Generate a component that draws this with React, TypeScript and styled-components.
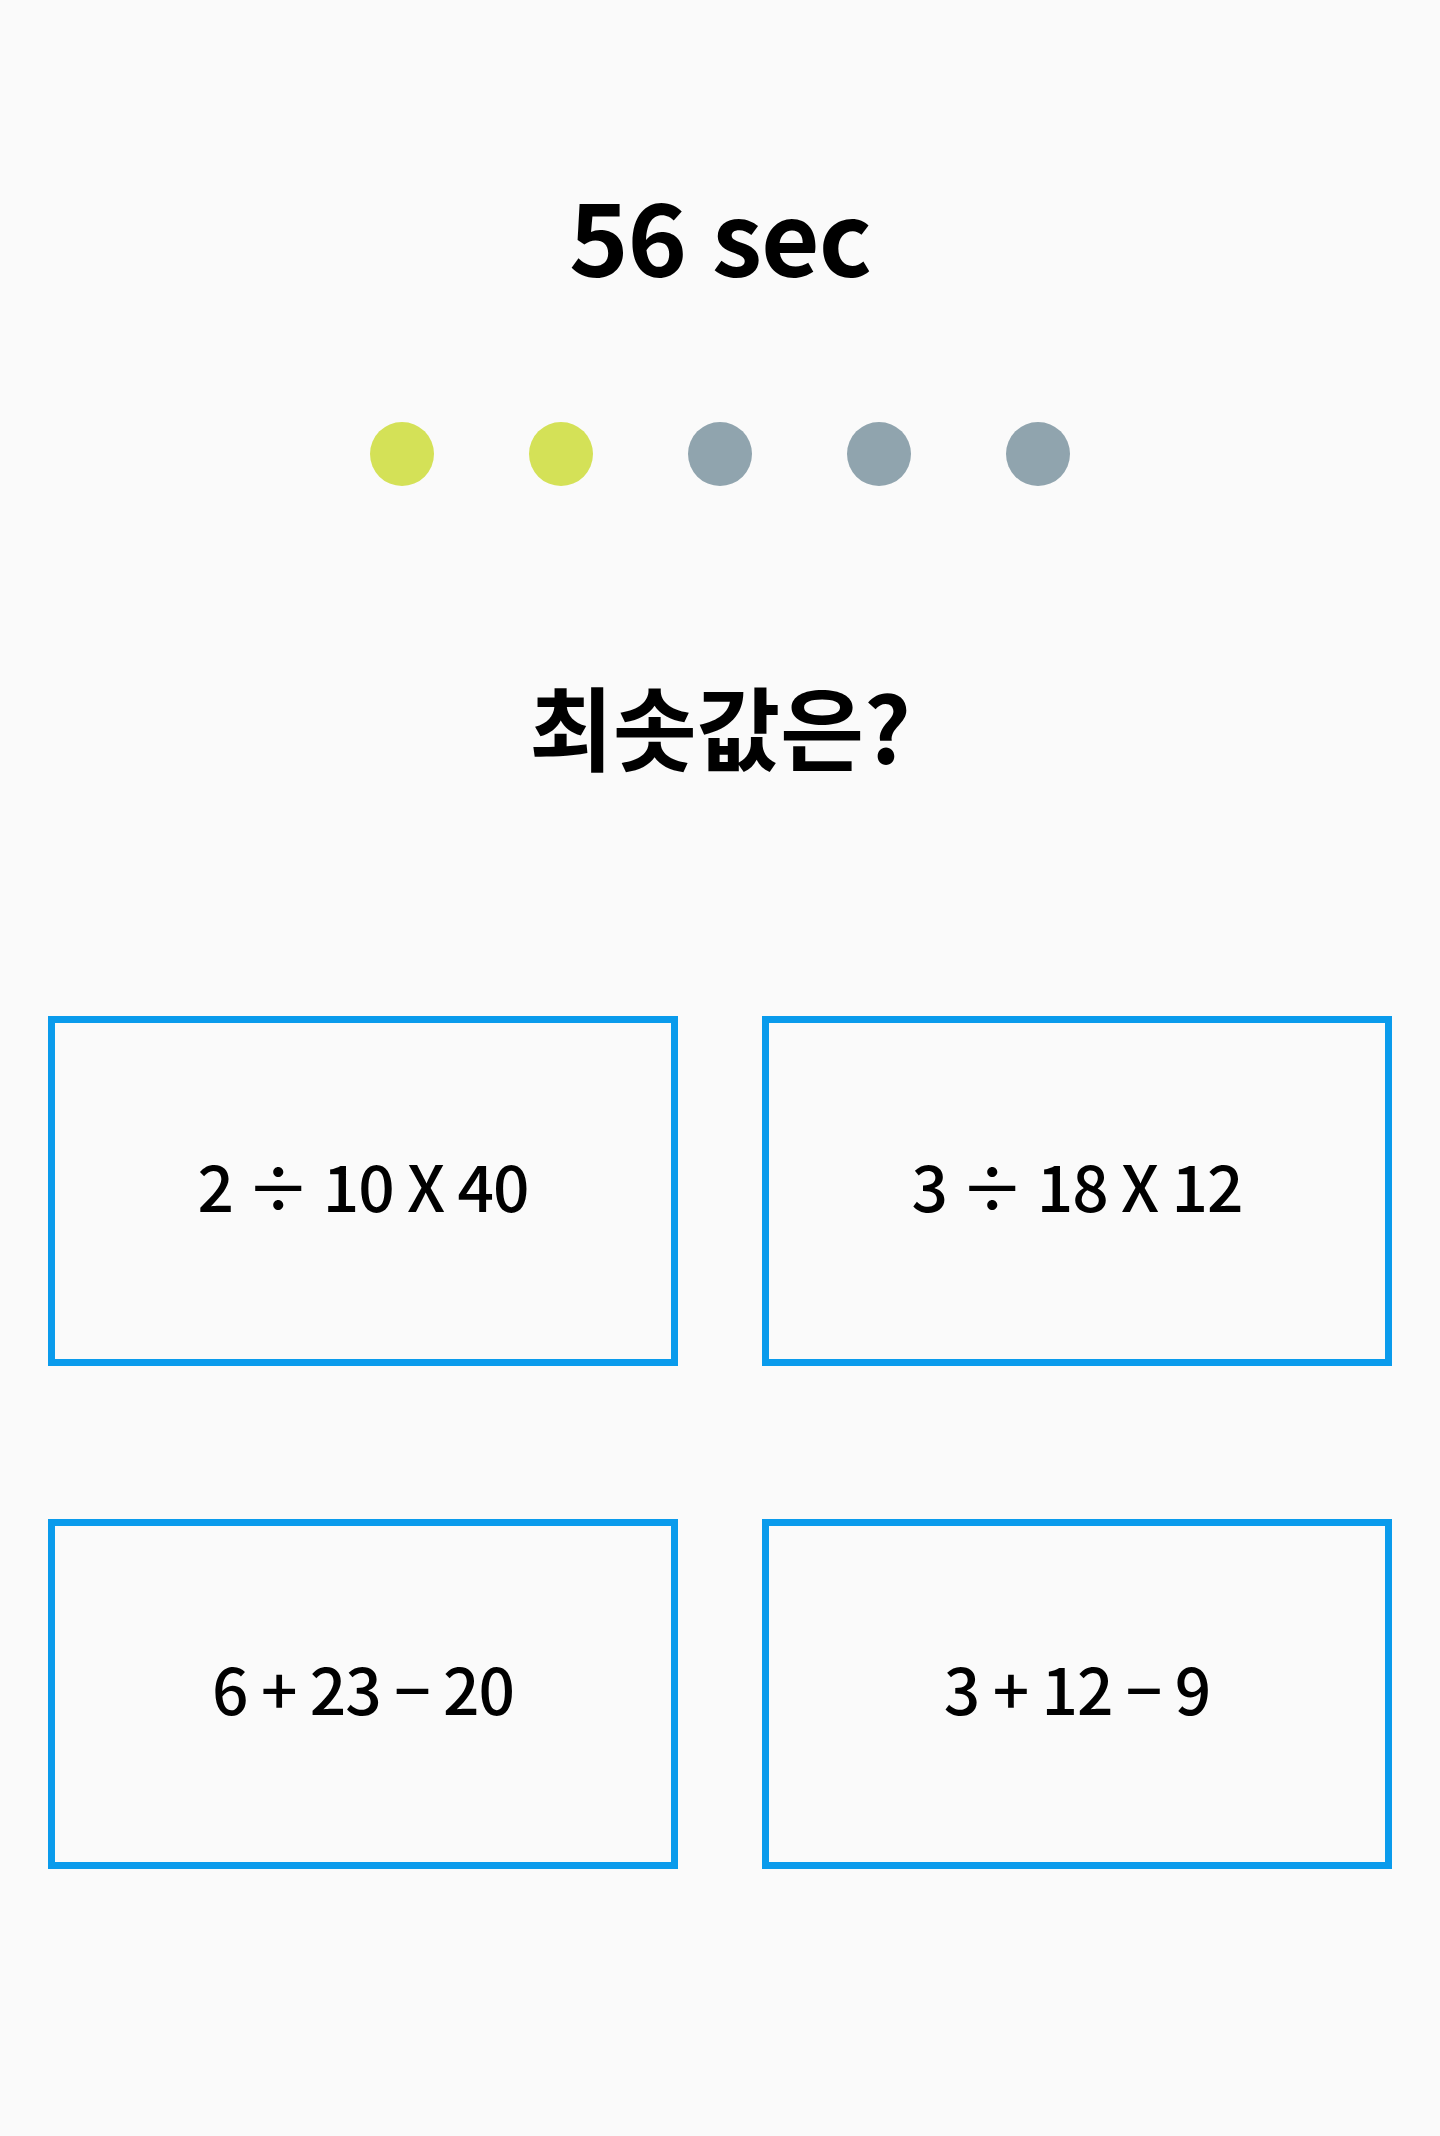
import React from "react";
import styled, { createGlobalStyle } from "styled-components";

const GlobalStyle = createGlobalStyle`
  html, body {
    margin: 0;
    padding: 0;
    background: #fafafa;
  }
  body {
    font-family: "Noto Sans CJK KR", "Noto Sans", sans-serif;
    color: #000;
  }
`;

const Screen = styled.main`
  min-height: 2136px;
  background: #fafafa;
  display: flex;
  flex-direction: column;
  align-items: center;
  padding-top: 183px;
  box-sizing: border-box;
`;

const Timer = styled.div`
  font-size: 101px;
  line-height: 101px;
  font-weight: 700;
  letter-spacing: -1px;
  word-spacing: 4px;
`;

const Progress = styled.div`
  margin-top: 138px;
  display: flex;
  gap: 95px;
`;

const Dot = styled.span<{ $done: boolean }>`
  width: 64px;
  height: 64px;
  border-radius: 50%;
  background: ${(p) => (p.$done ? "#d4e157" : "#90a4ae")};
`;

const Question = styled.h1`
  margin: 193px 0 0;
  font-size: 91px;
  line-height: 91px;
  font-weight: 700;
`;

const Choices = styled.div`
  margin-top: 246px;
  width: 100%;
  box-sizing: border-box;
  padding: 0 48px;
  display: grid;
  grid-template-columns: 1fr 1fr;
  grid-auto-rows: 350px;
  column-gap: 84px;
  row-gap: 153px;
`;

const Choice = styled.button`
  border: 7px solid #0a9bec;
  background: #fafafa;
  display: flex;
  align-items: center;
  justify-content: center;
  font-family: "Noto Sans CJK KR", "Noto Sans", sans-serif;
  font-size: 64px;
  font-weight: 500;
  color: #000;
  letter-spacing: -1px;
  padding: 0 0 14px;
  cursor: pointer;
`;

const choices = ["2 ÷ 10 X 40", "3 ÷ 18 X 12", "6 + 23 − 20", "3 + 12 − 9"];
const progress = [true, true, false, false, false];

export default function App() {
  return (
    <>
      <GlobalStyle />
      <Screen>
        <Timer>56 sec</Timer>
        <Progress>
          {progress.map((d, i) => (
            <Dot key={i} $done={d} />
          ))}
        </Progress>
        <Question>최솟값은?</Question>
        <Choices>
          {choices.map((c) => (
            <Choice key={c}>{c}</Choice>
          ))}
        </Choices>
      </Screen>
    </>
  );
}
